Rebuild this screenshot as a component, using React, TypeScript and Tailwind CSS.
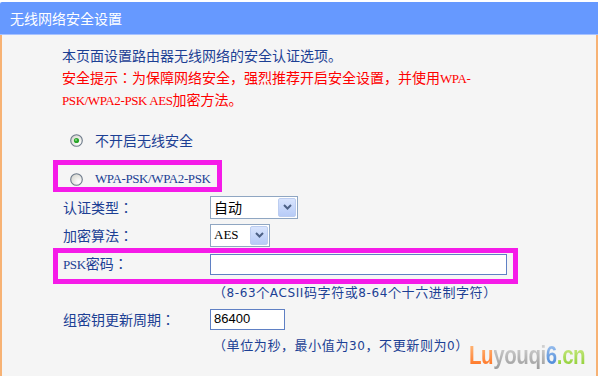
import React from 'react';

const cjk = "'Noto Sans CJK JP', 'Noto Sans CJK SC', 'Noto Sans', sans-serif";

function Radio({ checked }: { checked?: boolean }) {
  return (
    <svg width="13" height="13" viewBox="0 0 13 13" className="shrink-0">
      <defs>
        <radialGradient id={checked ? 'rg1' : 'rg2'} cx="0.7" cy="0.7" r="0.8">
          <stop offset="0" stopColor="#ffffff" />
          <stop offset="1" stopColor="#d6d6ce" />
        </radialGradient>
      </defs>
      <circle cx="6.5" cy="6.5" r="5.8" fill={`url(#${checked ? 'rg1' : 'rg2'})`} stroke="#6d7a8a" strokeWidth="1.1" />
      {checked && (
        <>
          <circle cx="6.5" cy="6.5" r="2.6" fill="#2aa52a" />
          <circle cx="6" cy="6" r="1" fill="#7fdc7f" />
        </>
      )}
    </svg>
  );
}

function Select({ value, width, serif }: { value: string; width: string; serif?: boolean }) {
  return (
    <div className={`${width} h-[23px] border border-[#8fa6c2] bg-white flex items-center justify-between pl-[3px] pr-[1px]`}>
      <span
        className={serif ? 'text-[13px] text-black' : 'text-[14px] text-black'}
        style={{ fontFamily: serif ? "'Liberation Serif', serif" : cjk }}
      >
        {value}
      </span>
      <div className="w-[18px] h-[19px] rounded-[2px] bg-gradient-to-b from-[#d8e4fd] to-[#b7cbf7] border border-[#bccdf0] flex items-center justify-center">
        <svg width="9" height="6" viewBox="0 0 9 6">
          <path d="M1 1 L4.5 4.5 L8 1" fill="none" stroke="#4d6185" strokeWidth="2" />
        </svg>
      </div>
    </div>
  );
}

function Label({ children }: { children: React.ReactNode }) {
  return <div className="w-[147px] shrink-0 text-[14px] text-[#1c3f94]">{children}</div>;
}

const Serif = ({ children }: { children: React.ReactNode }) => (
  <span className="text-[13px] tracking-[-0.4px]" style={{ fontFamily: "'Liberation Serif', serif" }}>{children}</span>
);

const Sans = ({ children }: { children: React.ReactNode }) => (
  <span className="text-[12px]" style={{ fontFamily: "'DejaVu Sans', sans-serif" }}>{children}</span>
);

export default function App() {
  return (
    <div className="w-[600px] h-[376px] bg-white pt-[2px] overflow-hidden" style={{ fontFamily: cjk }}>
      <div className="w-[598px] h-[374px] flex flex-col">
        <div className="h-[33px] bg-[#6699ff] border-b border-[#a7c2ff] flex items-center pl-[10px] rounded-tl-[2px]">
          <span className="text-[14px] text-white">无线网络安全设置</span>
        </div>
        <div className="relative flex-1 bg-[#f5f5f5] border-x-2 border-[#f7b274] pl-[51px]">
          <div className="pt-[10px] pl-[9px] text-[14px] leading-[21.5px]">
            <div className="text-[#1c3f94]">本页面设置路由器无线网络的安全认证选项。</div>
            <div className="text-[#ff0000]">
              安全提示：为保障网络安全，强烈推荐开启安全设置，并使用<Serif>WPA-</Serif>
            </div>
            <div className="text-[#ff0000]">
              <Serif>PSK/WPA2-PSK AES</Serif>加密方法。
            </div>
          </div>

          <div className="mt-[18px] h-[22px] pl-[17px] flex items-center gap-[12px]">
            <Radio checked />
            <span className="text-[14px] text-[#1c3f94]">不开启无线安全</span>
          </div>

          <div className="mt-[8px] w-[169px] h-[32px] border-[5px] border-[#f51be8] pl-[12px] pb-[1px] flex items-end gap-[12px]">
            <Radio />
            <span className="text-[13px] leading-[14px] tracking-[-0.4px] text-[#1c3f94]" style={{ fontFamily: "'Liberation Serif', serif" }}>
              WPA-PSK/WPA2-PSK
            </span>
          </div>

          <div className="mt-[4px] pl-[10px] flex items-center">
            <Label>认证类型：</Label>
            <Select value="自动" width="w-[88px]" />
          </div>

          <div className="mt-[5px] pl-[10px] flex items-center">
            <Label>加密算法：</Label>
            <Select value="AES" width="w-[60px]" serif />
          </div>

          <div className="mt-[1px] w-[465px] h-[36px] border-[5px] border-[#f51be8] pl-[5px] pt-[1px] flex items-start">
            <div className="h-[21px] flex items-center">
              <Label>
                <Serif>PSK</Serif>密码：
              </Label>
            </div>
            <div className="w-[297px] h-[21px] border border-[#5f80c4] bg-white" />
          </div>

          <div className="pl-[160px] h-[16px] leading-[16px] text-[13px] text-[#1c3f94] tracking-[0.6px]">
            （<Sans>8-63</Sans>个<Sans>ACSII</Sans>码字符或<Sans>8-64</Sans>个十六进制字符）
          </div>

          <div className="mt-[9px] pl-[10px] flex items-center">
            <Label>组密钥更新周期：</Label>
            <div className="w-[75px] h-[21px] border border-[#5f80c4] bg-white flex items-center pl-[3px]">
              <span className="text-[13px] text-black" style={{ fontFamily: "'Liberation Sans', sans-serif" }}>86400</span>
            </div>
          </div>

          <div className="mt-[7px] pl-[160px] h-[16px] leading-[16px] text-[13px] text-[#1c3f94] tracking-[0.6px]">
            （单位为秒，最小值为<Sans>30</Sans>，不更新则为<Sans>0</Sans>）
          </div>

          <div
            className="absolute left-[467px] top-[306px] text-[25px] font-bold leading-[28px] scale-x-[0.82] origin-left whitespace-nowrap tracking-[-0.5px]"
            style={{ fontFamily: "'Liberation Sans', sans-serif" }}
          >
            <span className="bg-gradient-to-b from-[#ffc080] to-[#ff6a00] bg-clip-text text-transparent">Lu</span>
            <span className="bg-gradient-to-b from-[#dcdcdc] to-[#9c9c9c] bg-clip-text text-transparent">youqi</span>
            <span className="bg-gradient-to-b from-[#a8c8f0] to-[#3b7fd4] bg-clip-text text-transparent">6</span>
            <span className="bg-gradient-to-b from-[#d8f090] to-[#88cc22] bg-clip-text text-transparent">.cn</span>
          </div>
        </div>
      </div>
    </div>
  );
}
